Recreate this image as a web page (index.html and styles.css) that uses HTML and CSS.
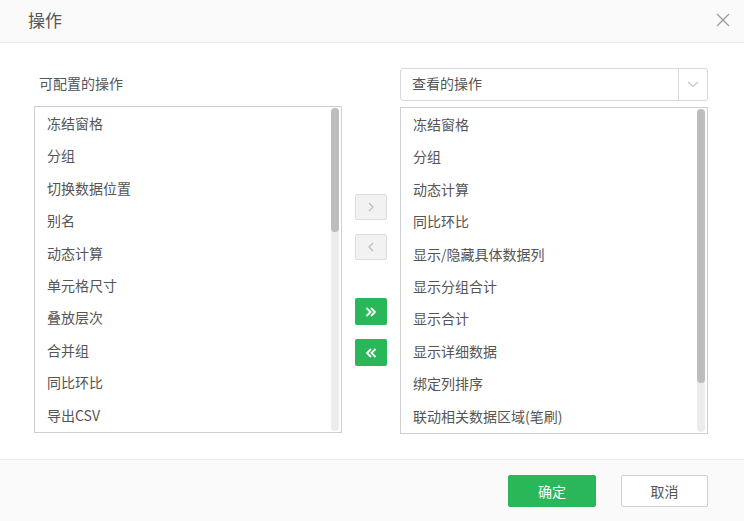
FILE: index.html
```html
<!DOCTYPE html>
<html lang="zh">
<head>
<meta charset="utf-8">
<title>操作</title>
<link rel="stylesheet" href="styles.css">
</head>
<body>
<div class="dialog">
  <div class="header">
    <span class="title">操作</span>
    <svg class="close" width="14" height="14" viewBox="0 0 14 14"><path d="M1 1 L13 13 M13 1 L1 13" stroke="#9a9a9a" stroke-width="1.3" fill="none"/></svg>
  </div>
  <div class="body">
    <div class="col">
      <div class="label">可配置的操作</div>
      <div class="list">
        <div class="items">
          <div class="item">冻结窗格</div>
          <div class="item">分组</div>
          <div class="item">切换数据位置</div>
          <div class="item">别名</div>
          <div class="item">动态计算</div>
          <div class="item">单元格尺寸</div>
          <div class="item">叠放层次</div>
          <div class="item">合并组</div>
          <div class="item">同比环比</div>
          <div class="item">导出CSV</div>
        </div>
        <div class="track"><div class="thumb thumb-left"></div></div>
      </div>
    </div>
    <div class="mid">
      <div class="mbtn gray"><svg width="8" height="12" viewBox="0 0 8 12"><path d="M2 2 L6 6 L2 10" stroke="#bdbdbd" stroke-width="1.2" fill="none"/></svg></div>
      <div class="mbtn gray second"><svg width="8" height="12" viewBox="0 0 8 12"><path d="M6 2 L2 6 L6 10" stroke="#bdbdbd" stroke-width="1.2" fill="none"/></svg></div>
      <div class="mbtn green third"><svg width="12" height="12" viewBox="0 0 12 12"><path d="M1.5 2 L5.5 6 L1.5 10 M6 2 L10 6 L6 10" stroke="#fff" stroke-width="1.8" fill="none"/></svg></div>
      <div class="mbtn green second"><svg width="12" height="12" viewBox="0 0 12 12"><path d="M10.5 2 L6.5 6 L10.5 10 M6 2 L2 6 L6 10" stroke="#fff" stroke-width="1.8" fill="none"/></svg></div>
    </div>
    <div class="col">
      <div class="select">
        <span class="select-text">查看的操作</span>
        <span class="select-arrow"><svg width="12" height="7" viewBox="0 0 12 7"><path d="M1 1 L6 5.5 L11 1" stroke="#c4c4c4" stroke-width="1.2" fill="none"/></svg></span>
      </div>
      <div class="list">
        <div class="items">
          <div class="item">冻结窗格</div>
          <div class="item">分组</div>
          <div class="item">动态计算</div>
          <div class="item">同比环比</div>
          <div class="item">显示/隐藏具体数据列</div>
          <div class="item">显示分组合计</div>
          <div class="item">显示合计</div>
          <div class="item">显示详细数据</div>
          <div class="item">绑定列排序</div>
          <div class="item">联动相关数据区域(笔刷)</div>
        </div>
        <div class="track"><div class="thumb thumb-right"></div></div>
      </div>
    </div>
  </div>
  <div class="footer">
    <div class="btn primary">确定</div>
    <div class="btn default">取消</div>
  </div>
</div>
</body>
</html>
```
FILE: styles.css
```css
* { box-sizing: border-box; }
html, body {
  margin: 0;
  padding: 0;
  background: #fff;
}
body {
  font-family: "Noto Sans CJK SC", "Noto Sans", sans-serif;
  color: #555;
}
.dialog {
  width: 744px;
  height: 521px;
  display: flex;
  flex-direction: column;
  overflow: hidden;
}
.header {
  height: 43px;
  flex: none;
  background: #fafafa;
  border-bottom: 1px solid #ebebeb;
  display: flex;
  align-items: center;
  justify-content: space-between;
  padding: 0 14px 0 28px;
}
.title {
  font-size: 17px;
  color: #555;
  line-height: 20px;
  margin-top: -3px;
}
.close {
  display: block;
  margin-top: -3px;
}
.body {
  flex: 1;
  display: flex;
  padding: 25px 36px 0 34px;
}
.col {
  width: 308px;
  flex: none;
  display: flex;
  flex-direction: column;
}
.label {
  height: 32px;
  line-height: 30px;
  font-size: 14px;
  padding-left: 5px;
  color: #555;
}
.select {
  height: 33px;
  border: 1px solid #d9d9d9;
  border-radius: 3px;
  display: flex;
  align-items: stretch;
}
.select-text {
  flex: 1;
  font-size: 14px;
  line-height: 29px;
  padding-left: 11px;
  color: #555;
}
.select-arrow {
  width: 29px;
  border-left: 1px solid #d9d9d9;
  display: flex;
  align-items: center;
  justify-content: center;
}
.list {
  margin-top: 6px;
  height: 327px;
  border: 1px solid #cfcfcf;
  display: flex;
  padding: 1px 2px 1px 0;
}
.items {
  flex: 1;
  padding-top: 0;
  margin-top: -1px;
  overflow: hidden;
}
.item {
  height: 32.4px;
  line-height: 32px;
  font-size: 14px;
  padding-left: 12px;
  color: #555;
  white-space: nowrap;
}
.track {
  width: 8px;
  flex: none;
  background: #ececec;
  border-radius: 4px;
}
.thumb {
  width: 8px;
  background: #bdbdbd;
  border-radius: 4px;
}
.thumb-left { height: 124px; }
.thumb-right { height: 274px; }
.mid {
  width: 58px;
  flex: none;
  display: flex;
  flex-direction: column;
  align-items: center;
  padding-top: 126px;
}
.mbtn {
  width: 32px;
  height: 26px;
  border-radius: 2px;
  display: flex;
  align-items: center;
  justify-content: center;
}
.mbtn.gray {
  background: #f2f2f2;
  border: 1px solid #dcdcdc;
}
.mbtn.green {
  background: #2ab75a;
  height: 27px;
}
.mbtn.second { margin-top: 14px; }
.mbtn.third { margin-top: 38px; }
.footer {
  height: 62px;
  flex: none;
  background: #fafafa;
  border-top: 1px solid #ebebeb;
  display: flex;
  justify-content: flex-end;
  align-items: flex-start;
  padding: 15px 36px 0 0;
  gap: 25px;
}
.btn {
  height: 32px;
  width: 88px;
  border-radius: 2px;
  font-size: 14px;
  line-height: 30px;
  text-align: center;
}
.btn.primary {
  background: #2ab75a;
  border: 1px solid #2ab75a;
  color: #fff;
}
.btn.default {
  background: #fff;
  border: 1px solid #cfcfcf;
  color: #555;
  width: 87px;
}
```
